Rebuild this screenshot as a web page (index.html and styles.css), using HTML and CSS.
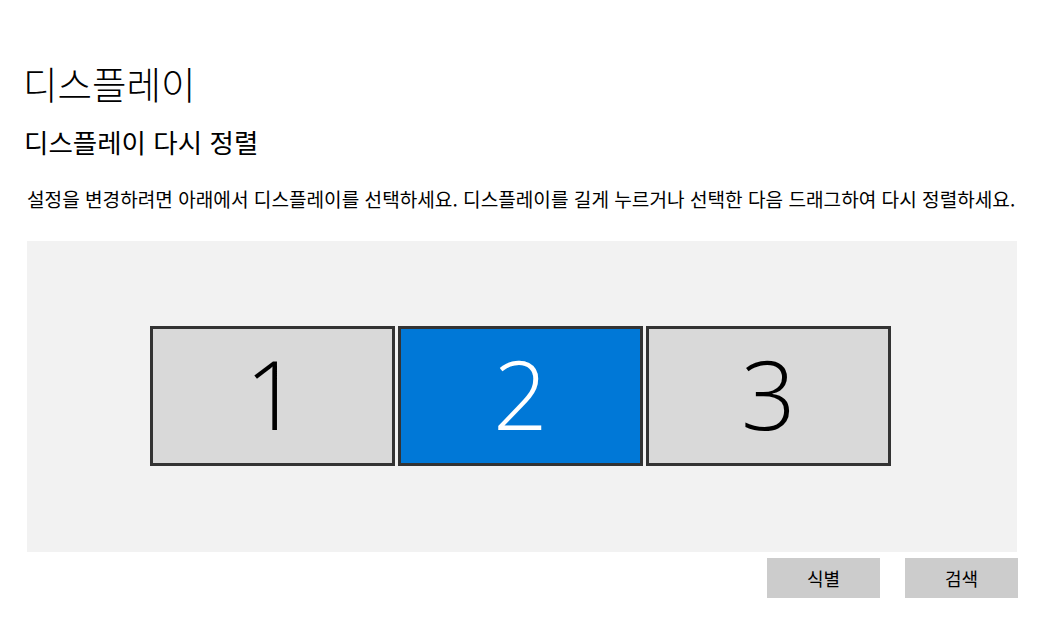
FILE: index.html
```html
<!DOCTYPE html>
<html lang="ko">
<head>
<meta charset="utf-8">
<title>디스플레이</title>
<link rel="stylesheet" href="styles.css">
</head>
<body>
<main class="page">
  <h1 class="title">디스플레이</h1>
  <h2 class="subtitle">디스플레이 다시 정렬</h2>
  <p class="desc">설정을 변경하려면 아래에서 디스플레이를 선택하세요. 디스플레이를 길게 누르거나 선택한 다음 드래그하여 다시 정렬하세요.</p>
  <section class="canvas">
    <div class="monitors">
      <div class="monitor"><span>1</span></div>
      <div class="monitor selected"><span>2</span></div>
      <div class="monitor"><span>3</span></div>
    </div>
  </section>
  <div class="actions">
    <button class="btn">식별</button>
    <button class="btn">검색</button>
  </div>
</main>
</body>
</html>
```
FILE: styles.css
```css
html, body {
  margin: 0;
  padding: 0;
  background: #ffffff;
}
body {
  font-family: "Noto Sans CJK KR", "Noto Sans", sans-serif;
  color: #000;
}
.page {
  width: 1041px;
  height: 629px;
  box-sizing: border-box;
  padding: 0 0 0 27px;
  display: flex;
  flex-direction: column;
}
.title {
  margin: 57px 0 0 -4px;
  font-size: 37.5px;
  font-weight: 300;
  line-height: 52px;
}
.subtitle {
  margin: 15px 0 0 -3px;
  font-size: 26.5px;
  font-weight: 400;
  line-height: 36px;
}
.desc {
  margin: 25px 0 0 0;
  font-size: 19.1px;
  font-weight: 400;
  line-height: 28px;
  white-space: nowrap;
}
.canvas {
  margin-top: 28px;
  width: 990px;
  height: 311px;
  background: #f2f2f2;
  display: flex;
  align-items: center;
  justify-content: center;
}
.monitors {
  display: flex;
  gap: 3px;
  margin-left: -3px;
  margin-top: -2px;
}
.monitor {
  width: 245px;
  height: 140px;
  box-sizing: border-box;
  border: 3px solid #333333;
  background: #d9d9d9;
  display: flex;
  align-items: center;
  justify-content: center;
  font-family: "Open Sans", "Noto Sans", sans-serif;
  font-weight: 300;
  font-size: 96px;
  color: #000;
  line-height: 1;
}
.monitor span {
  margin-top: -6px;
}
.monitor.selected {
  background: #0078d7;
  color: #ffffff;
}
.actions {
  display: flex;
  justify-content: flex-end;
  gap: 25px;
  width: 991px;
  margin-top: 6px;
}
.btn {
  width: 113px;
  height: 40px;
  border: none;
  background: #cccccc;
  font-family: "Noto Sans CJK KR", "Noto Sans", sans-serif;
  font-size: 18px;
  color: #000;
  padding: 0;
}
```
